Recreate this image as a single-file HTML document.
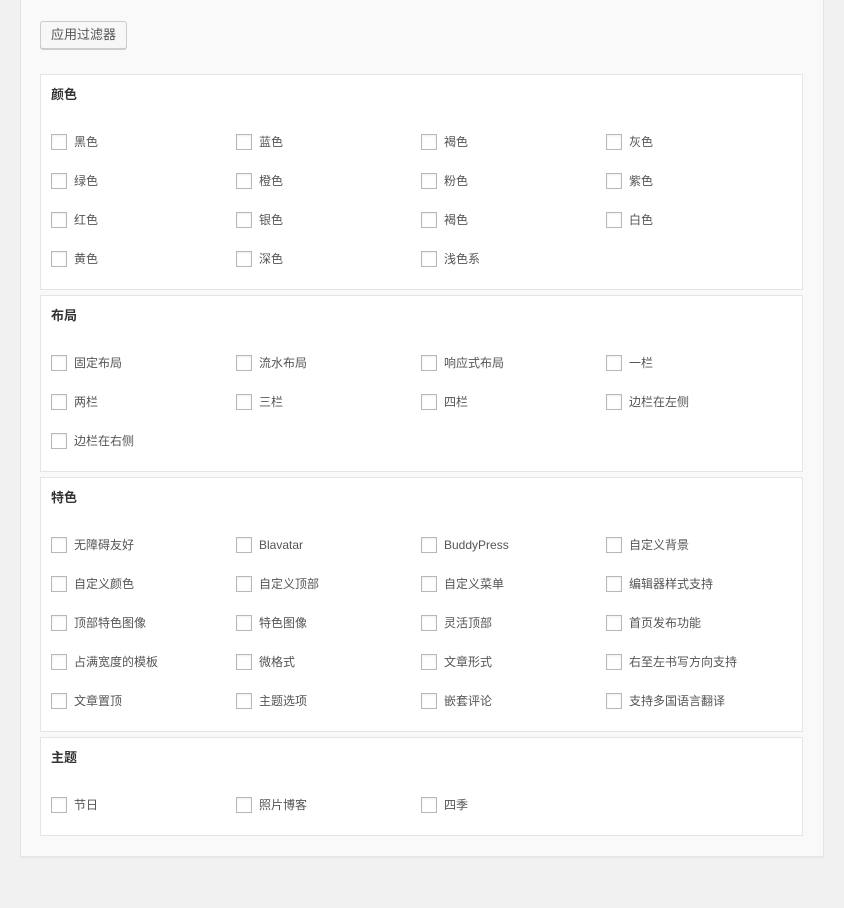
<!DOCTYPE html><html><head><meta charset="utf-8"><style>
*{box-sizing:border-box;margin:0;padding:0}
body{width:844px;height:908px;background:#f1f1f1;font-family:"Liberation Sans","Noto Sans CJK SC",sans-serif;color:#555;position:relative;overflow:hidden}
.panel{position:absolute;left:20px;top:-1px;width:804px;height:858px;background:#f9f9f9;border:1px solid #e5e5e5;box-shadow:0 1px 1px rgba(0,0,0,.04)}
.btn{position:absolute;left:40px;top:21px;width:87px;height:28px;border:1px solid #ccc;border-radius:3px;background:#f7f7f7;box-shadow:0 1px 0 #ccc;font-size:13px;color:#555;line-height:26px;text-align:center}
.sec{position:absolute;left:40px;width:763px;background:#fff;border:1px solid #e5e5e5;padding:10px 0 0 10px}
.sec h3{font-size:13px;font-weight:bold;color:#333;line-height:20px;height:20px;margin-bottom:17px}
.g{display:flex;flex-wrap:wrap}
.i{width:185px;height:39px;display:flex;align-items:center;font-size:12px}
.c{width:16px;height:16px;border:1px solid #b4b9be;background:#fff;margin-right:7px;box-shadow:inset 0 1px 2px rgba(0,0,0,.07)}
</style></head><body>
<div class="panel"></div>
<div class="btn">应用过滤器</div>
<div class="sec" style="top:74px;height:216px"><h3>颜色</h3><div class="g">
<div class="i"><span class="c"></span>黑色</div><div class="i"><span class="c"></span>蓝色</div><div class="i"><span class="c"></span>褐色</div><div class="i"><span class="c"></span>灰色</div>
<div class="i"><span class="c"></span>绿色</div><div class="i"><span class="c"></span>橙色</div><div class="i"><span class="c"></span>粉色</div><div class="i"><span class="c"></span>紫色</div>
<div class="i"><span class="c"></span>红色</div><div class="i"><span class="c"></span>银色</div><div class="i"><span class="c"></span>褐色</div><div class="i"><span class="c"></span>白色</div>
<div class="i"><span class="c"></span>黄色</div><div class="i"><span class="c"></span>深色</div><div class="i"><span class="c"></span>浅色系</div></div></div>
<div class="sec" style="top:295px;height:177px"><h3>布局</h3><div class="g">
<div class="i"><span class="c"></span>固定布局</div><div class="i"><span class="c"></span>流水布局</div><div class="i"><span class="c"></span>响应式布局</div><div class="i"><span class="c"></span>一栏</div>
<div class="i"><span class="c"></span>两栏</div><div class="i"><span class="c"></span>三栏</div><div class="i"><span class="c"></span>四栏</div><div class="i"><span class="c"></span>边栏在左侧</div>
<div class="i"><span class="c"></span>边栏在右侧</div></div></div>
<div class="sec" style="top:477px;height:255px"><h3>特色</h3><div class="g">
<div class="i"><span class="c"></span>无障碍友好</div><div class="i"><span class="c"></span>Blavatar</div><div class="i"><span class="c"></span>BuddyPress</div><div class="i"><span class="c"></span>自定义背景</div>
<div class="i"><span class="c"></span>自定义颜色</div><div class="i"><span class="c"></span>自定义顶部</div><div class="i"><span class="c"></span>自定义菜单</div><div class="i"><span class="c"></span>编辑器样式支持</div>
<div class="i"><span class="c"></span>顶部特色图像</div><div class="i"><span class="c"></span>特色图像</div><div class="i"><span class="c"></span>灵活顶部</div><div class="i"><span class="c"></span>首页发布功能</div>
<div class="i"><span class="c"></span>占满宽度的模板</div><div class="i"><span class="c"></span>微格式</div><div class="i"><span class="c"></span>文章形式</div><div class="i"><span class="c"></span>右至左书写方向支持</div>
<div class="i"><span class="c"></span>文章置顶</div><div class="i"><span class="c"></span>主题选项</div><div class="i"><span class="c"></span>嵌套评论</div><div class="i"><span class="c"></span>支持多国语言翻译</div></div></div>
<div class="sec" style="top:737px;height:99px"><h3>主题</h3><div class="g">
<div class="i"><span class="c"></span>节日</div><div class="i"><span class="c"></span>照片博客</div><div class="i"><span class="c"></span>四季</div></div></div>
</body></html>
